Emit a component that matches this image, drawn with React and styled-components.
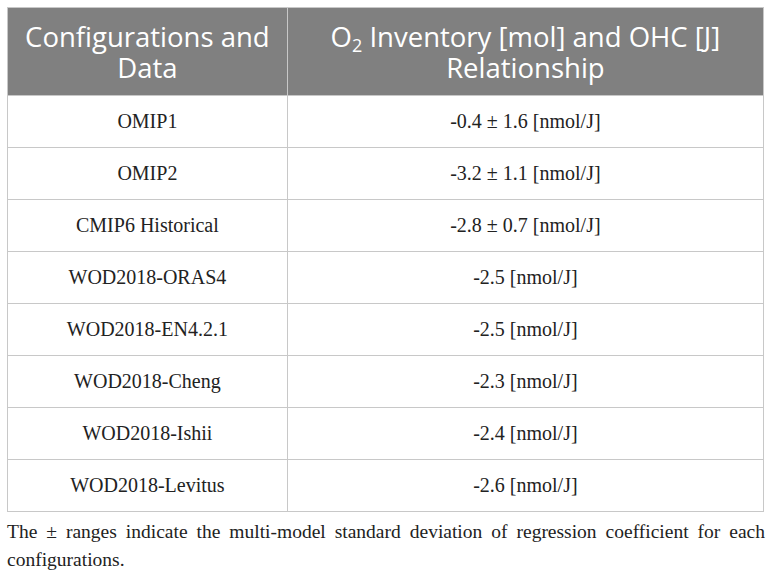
import React from 'react';
import styled, { createGlobalStyle } from 'styled-components';

const rows = [
    ["OMIP1", "-0.4 ± 1.6 [nmol/J]"],
    ["OMIP2", "-3.2 ± 1.1 [nmol/J]"],
    ["CMIP6 Historical", "-2.8 ± 0.7 [nmol/J]"],
    ["WOD2018-ORAS4", "-2.5 [nmol/J]"],
    ["WOD2018-EN4.2.1", "-2.5 [nmol/J]"],
    ["WOD2018-Cheng", "-2.3 [nmol/J]"],
    ["WOD2018-Ishii", "-2.4 [nmol/J]"],
    ["WOD2018-Levitus", "-2.6 [nmol/J]"]
];

const GlobalStyle = createGlobalStyle`
    html, body {
        margin: 0;
        background: #ffffff;
    }
`;

const Page = styled.div`
    width: 772px;
    padding: 7px 7px 0 7px;
    box-sizing: border-box;
    font-family: 'Liberation Serif', 'Times New Roman', serif;
    color: #222;
`;

const Table = styled.table`
    width: 757px;
    border-collapse: collapse;
    border: 1px solid #c8c8c8;
`;

const HeadCell = styled.th`
    background-color: #808080;
    color: #ffffff;
    font-family: 'Open Sans', 'Noto Sans', sans-serif;
    font-weight: 400;
    font-size: 27.5px;
    line-height: 31px;
    height: 88px;
    padding: 0 8px;
    text-align: center;
    vertical-align: middle;
    width: ${props => props.w}px;
    border-left: 1px solid #c8c8c8;
    box-sizing: border-box;

    &:first-child {
        border-left: none;
    }

    sub {
        font-size: 18px;
        line-height: 0;
        vertical-align: -5px;
    }
`;

const Cell = styled.td`
    font-size: 20px;
    height: 51px;
    padding: 0 8px;
    text-align: center;
    vertical-align: middle;
    border: 1px solid #c8c8c8;
    color: #222;
`;

const Caption = styled.p`
    margin: 6px 0 0 0;
    font-size: 19.5px;
    line-height: 28px;
    text-align: justify;
    color: #222;
`;

function App() {
    return (
        <Page>
            <GlobalStyle />
            <Table>
                <thead>
                    <tr>
                        <HeadCell w={280}>Configurations and Data</HeadCell>
                        <HeadCell w={477}>
                            O<sub>2</sub> Inventory [mol] and OHC [J] Relationship
                        </HeadCell>
                    </tr>
                </thead>
                <tbody>
                    {rows.map(([name, value]) => (
                        <tr key={name}>
                            <Cell>{name}</Cell>
                            <Cell>{value}</Cell>
                        </tr>
                    ))}
                </tbody>
            </Table>
            <Caption>
                The ± ranges indicate the multi-model standard deviation of regression coefficient for each configurations.
            </Caption>
        </Page>
    );
}

export default App;
